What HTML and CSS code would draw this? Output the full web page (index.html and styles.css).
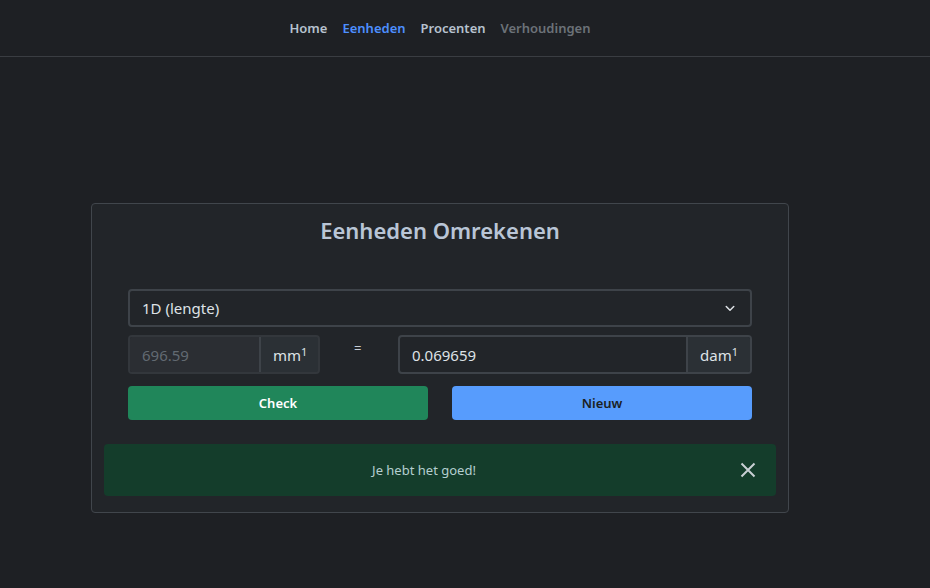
FILE: index.html
```html
<!DOCTYPE html>
<html lang="nl">
<head>
<meta charset="utf-8">
<title>Eenheden Omrekenen</title>
<link rel="stylesheet" href="styles.css">
</head>
<body>
<nav class="navbar">
  <a class="nav-link" href="#">Home</a>
  <a class="nav-link active" href="#">Eenheden</a>
  <a class="nav-link" href="#">Procenten</a>
  <a class="nav-link disabled" href="#">Verhoudingen</a>
</nav>
<main class="main">
  <section class="card">
    <h1 class="title">Eenheden Omrekenen</h1>
    <div class="form">
      <div class="select">
        <span>1D (lengte)</span>
        <svg class="chev" width="12" height="12" viewBox="0 0 16 16"><path d="M3 6l5 5 5-5" fill="none" stroke="#dee2e6" stroke-width="2" stroke-linecap="round" stroke-linejoin="round"/></svg>
      </div>
      <div class="row">
        <div class="group left">
          <div class="input disabled">696.59</div>
          <div class="addon">mm<sup>1</sup></div>
        </div>
        <div class="eq">=</div>
        <div class="group right">
          <div class="input">0.069659</div>
          <div class="addon">dam<sup>1</sup></div>
        </div>
      </div>
      <div class="buttons">
        <button class="btn success">Check</button>
        <button class="btn primary">Nieuw</button>
      </div>
    </div>
    <div class="alert">
      <span class="alert-text">Je hebt het goed!</span>
      <svg class="close" width="16" height="16" viewBox="0 0 16 16"><path d="M1.5 1.5l13 13M14.5 1.5l-13 13" stroke="#c9cfd4" stroke-width="2" fill="none"/></svg>
    </div>
  </section>
</main>
</body>
</html>
```
FILE: styles.css
```css
* { box-sizing: border-box; }
html, body { margin: 0; padding: 0; }
body {
  background: #1e2024;
  font-family: "Noto Sans", "Open Sans", sans-serif;
  color: #dee2e6;
  height: 588px;
  overflow: hidden;
}
.navbar {
  height: 57px;
  border-bottom: 1px solid #3a3d42;
  display: flex;
  justify-content: center;
  align-items: center;
  gap: 15px;
  padding-right: 50px;
}
.nav-link {
  font-size: 13px;
  font-weight: 600;
  color: #b7c2cf;
  text-decoration: none;
}
.nav-link.active { color: #4d8fff; }
.nav-link.disabled { color: #6c7278; }
.main {
  display: flex;
  justify-content: center;
  padding-top: 146px;
  padding-right: 50px;
}
.card {
  width: 698px;
  height: 310px;
  background: #222529;
  border: 1px solid #41464c;
  border-radius: 4px;
  padding: 10px 12px 0;
  display: flex;
  flex-direction: column;
}
.title {
  margin: 0;
  text-align: center;
  font-size: 22px;
  font-weight: 600;
  color: #b9c5d6;
  line-height: 32px;
}
.form {
  margin-top: 43px;
  padding: 0 24px;
  display: flex;
  flex-direction: column;
}
.select {
  height: 38px;
  border: 2px solid #3e4349;
  border-radius: 4px;
  display: flex;
  align-items: center;
  justify-content: space-between;
  padding: 0 12px;
  font-size: 15px;
  color: #dee2e6;
}
.chev { margin-right: 2px; }
.row {
  margin-top: 8px;
  display: flex;
  align-items: center;
  height: 39px;
}
.group {
  display: flex;
  height: 39px;
  border: 2px solid #3e4349;
  border-radius: 4px;
  overflow: hidden;
}
.group.left { width: 192px; border-color: #33373c; }
.group.right { width: 354px; margin-left: auto; }
.input {
  flex: 1;
  display: flex;
  align-items: center;
  padding: 0 12px;
  font-size: 15px;
  color: #dee2e6;
}
.input.disabled {
  background: #2b2e33;
  color: #626a72;
}
.addon {
  display: flex;
  align-items: center;
  padding: 0 12px;
  background: #2b3035;
  border-left: 2px solid #3e4349;
  font-size: 15px;
  color: #dee2e6;
}
.group.left .addon { width: 61px; border: 2px solid #3e4349; border-radius: 0 4px 4px 0; margin: -2px -2px -2px 0; height: 39px; }
.group.right .addon { width: 64px; }
.addon sup { font-size: 11px; position: relative; top: -3px; }
.eq {
  margin-left: 34px;
  font-size: 13px;
  color: #c7cdd4;
  margin-top: -14px;
}
.buttons {
  margin-top: 12px;
  display: flex;
  gap: 24px;
}
.btn {
  flex: 1;
  height: 34px;
  border: none;
  border-radius: 4px;
  font-family: inherit;
  font-size: 13px;
  font-weight: 600;
}
.btn.success { background: #20865a; color: #ffffff; }
.btn.primary { background: #579cfd; color: #1b1f24; }
.alert {
  margin-top: 24px;
  height: 52px;
  background: #143d2b;
  border-radius: 4px;
  display: flex;
  align-items: center;
  position: relative;
  justify-content: center;
  padding-right: 32px;
}
.alert-text {
  font-size: 13px;
  color: #b4cfd0;
}
.close {
  position: absolute;
  right: 20px;
  top: 18px;
}
```
